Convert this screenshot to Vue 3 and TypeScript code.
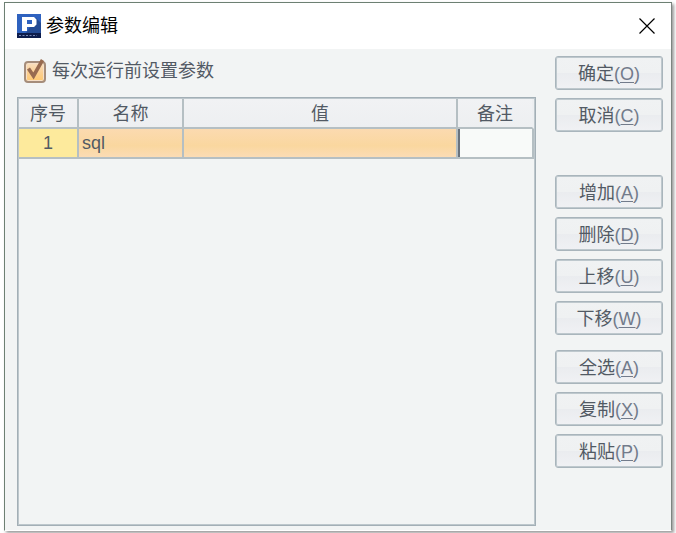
<script setup lang="ts">
import { ref } from 'vue'

interface Action {
  label: string
  key: string
}

interface Param {
  name: string
  value: string
  remark: string
}

const groups: Action[][] = [
  [
    { label: '确定', key: 'O' },
    { label: '取消', key: 'C' },
  ],
  [
    { label: '增加', key: 'A' },
    { label: '删除', key: 'D' },
    { label: '上移', key: 'U' },
    { label: '下移', key: 'W' },
  ],
  [
    { label: '全选', key: 'A' },
    { label: '复制', key: 'X' },
    { label: '粘贴', key: 'P' },
  ],
]

const askBeforeRun = ref(true)
const params = ref<Param[]>([{ name: 'sql', value: '', remark: '' }])
</script>

<template>
  <div class="stage">
    <section class="dialog" role="dialog" aria-labelledby="dialog-title">
      <header class="titlebar">
        <svg class="logo" viewBox="0 0 24 24" aria-hidden="true">
          <rect width="24" height="24" fill="#2f62bf" />
          <path d="M19 4 L24 9 V19 H9 Z" fill="#234a93" />
          <rect y="19" width="24" height="5" fill="#0c1c4c" />
          <path d="M5 3 H17 L19.500 5.500 V10.500 L17 13 H10 V17 H5 Z M10 6 V10 H15 V6 Z" fill="#fff" fill-rule="evenodd" />
          <path d="M2 21.500 H20" stroke="#7585b4" stroke-width="1" stroke-dasharray="2 1.500" />
        </svg>
        <h1 id="dialog-title">参数编辑</h1>
        <button class="close" type="button" aria-label="关闭">
          <svg viewBox="0 0 16 16" aria-hidden="true">
            <path d="M0.500 0.500 L15.500 15.500 M15.500 0.500 L0.500 15.500" fill="none" stroke="#000" stroke-width="1.200" />
          </svg>
        </button>
      </header>

      <div class="body">
        <main class="main">
          <label class="option" for="ask">
            <span class="tick">
              <input id="ask" v-model="askBeforeRun" type="checkbox" />
              <svg v-if="askBeforeRun" viewBox="0 0 22 24" aria-hidden="true">
                <path d="M4.500 9.500 L9.500 17 L18.500 1" fill="none" stroke="#986b50" stroke-width="3.600" />
              </svg>
            </span>
            <span>每次运行前设置参数</span>
          </label>

          <div class="grid">
            <table>
              <colgroup>
                <col class="c-no" />
                <col class="c-name" />
                <col />
                <col class="c-remark" />
              </colgroup>
              <thead>
                <tr>
                  <th>序号</th>
                  <th>名称</th>
                  <th>值</th>
                  <th>备注</th>
                </tr>
              </thead>
              <tbody>
                <tr v-for="(p, i) in params" :key="i">
                  <td class="no">{{ i + 1 }}</td>
                  <td class="picked">{{ p.name }}</td>
                  <td class="picked">{{ p.value }}</td>
                  <td class="editing"><input v-model="p.remark" type="text" aria-label="备注" /></td>
                </tr>
              </tbody>
            </table>
          </div>
        </main>

        <aside class="actions">
          <div v-for="(group, g) in groups" :key="g" class="group">
            <button v-for="a in group" :key="a.label" class="action" type="button">
              <span>{{ a.label }}</span><span class="key">(<u>{{ a.key }}</u>)</span>
            </button>
          </div>
        </aside>
      </div>
    </section>
  </div>
</template>

<style>
body {
  background: #fff;
}
</style>

<style scoped>
* {
  box-sizing: border-box;
}

.stage {
  display: flex;
  min-height: 100vh;
  padding: 2px 4px;
  font-family: "Liberation Sans", "Noto Sans CJK SC", sans-serif;
  font-size: 18px;
  line-height: 24px;
  color: #525a64;
}

.dialog {
  flex: 1;
  display: flex;
  flex-direction: column;
  min-width: 0;
  border: 1px solid #6d8073;
  border-right-color: #7d8581;
  border-bottom-color: #fff;
  background: #f2f4f4;
  box-shadow: 2px 2px 3px #999;
}

.titlebar {
  display: flex;
  align-items: center;
  gap: 5px;
  height: 46px;
  padding: 0 16px 0 12px;
  background: #fff;
  color: #000;
}

.logo {
  width: 24px;
  height: 24px;
}

h1 {
  flex: 1;
  margin: 0;
  font-size: 18px;
  font-weight: 400;
}

.close {
  display: flex;
  padding: 0;
  border: 0;
  background: none;
}

.close svg {
  width: 16px;
  height: 16px;
}

.body {
  flex: 1;
  display: flex;
  gap: 19px;
  padding: 7px 8px 4px 12px;
}

.main {
  flex: 1;
  display: flex;
  flex-direction: column;
  gap: 11px;
  min-width: 0;
}

.option {
  display: flex;
  align-items: center;
  gap: 5px;
  height: 30px;
  padding-left: 7px;
}

.tick {
  display: grid;
  width: 23px;
  height: 24px;
}

.tick > * {
  grid-area: 1 / 1;
}

.tick input {
  appearance: none;
  align-self: end;
  width: 22px;
  height: 22px;
  margin: 0;
  border: 2px solid #a58d7b;
  border-radius: 4px;
  background: linear-gradient(#f8dfc0, #fbd095 50%, #ffc970);
  box-shadow: inset 0 0 0 1px #f6dfc7;
}

.tick svg {
  width: 22px;
  height: 24px;
  pointer-events: none;
}

.grid {
  flex: 1;
  padding: 1px;
  border: 1px solid #a3afb6;
  box-shadow: inset 0 0 0 1px #bdc7cc;
}

table {
  width: 100%;
  table-layout: fixed;
  border-collapse: separate;
  border-spacing: 0;
}

.c-no {
  width: 60px;
}

.c-name {
  width: 105px;
}

.c-remark {
  width: 76px;
}

th,
td {
  height: 30px;
  padding: 0 3px;
  border-right: 2px solid #b5bfc3;
  border-bottom: 2px solid #b5bfc3;
  font-weight: 400;
  text-align: left;
}

th {
  padding-top: 2px;
  background: linear-gradient(#f1f2f4, #edeff1);
  text-align: center;
}

th:last-child {
  border-right-color: #edeff1;
}

.no {
  background: #fdea9c;
  text-align: center;
}

.picked {
  background: linear-gradient(#fbdab0, #fad79f 60%, #fbdcb5);
}

.editing {
  padding: 0;
  background: #f8faf9;
}

.editing input {
  display: block;
  width: 100%;
  height: 28px;
  padding: 0 3px;
  border: 0;
  border-left: 2px solid #6a737d;
  outline: 0;
  background: none;
  font: inherit;
  color: inherit;
}

.actions {
  display: flex;
  flex-direction: column;
  width: 108px;
}

.group {
  display: flex;
  flex-direction: column;
  gap: 8px;
}

.group:nth-child(2) {
  margin: 43px 0 15px;
}

.action {
  height: 34px;
  padding: 2px 0 0;
  border: 1px solid #a9b5bc;
  border-radius: 3px;
  background: linear-gradient(#f0f2f3, #eff1f2 50%, #eaecef 50%, #f0f1f4);
  box-shadow: inset 0 0 0 1px #bec8cd;
  font: inherit;
  color: inherit;
}

.key {
  color: #727b8b;
}

u {
  text-decoration-thickness: 1px;
  text-underline-offset: 2px;
}
</style>
